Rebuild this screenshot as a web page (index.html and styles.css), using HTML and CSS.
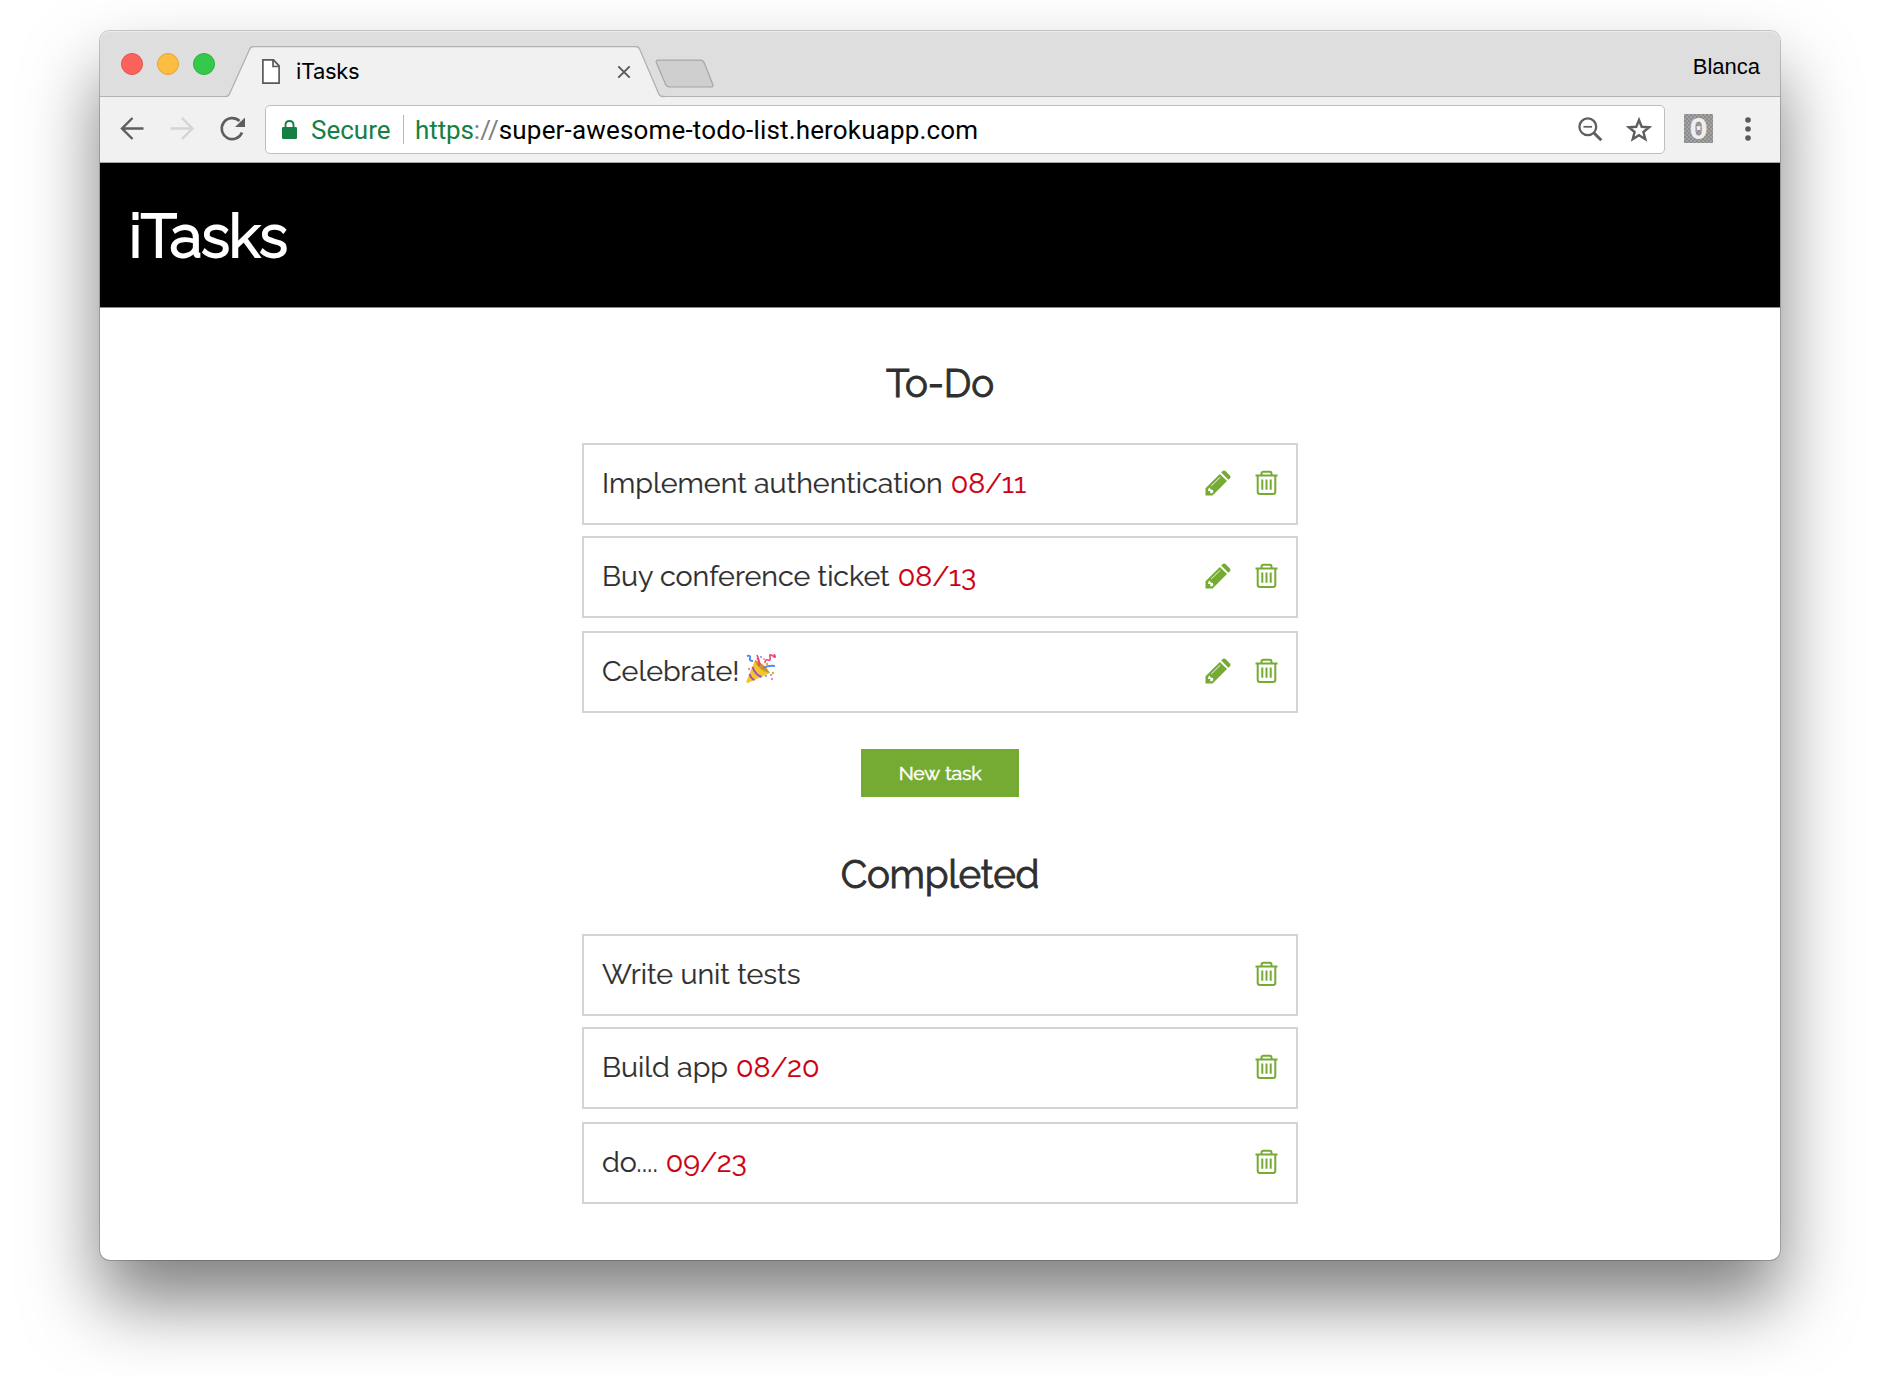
FILE: index.html
```html
<!DOCTYPE html>
<html lang="en">
<head>
<meta charset="utf-8">
<title>iTasks</title>
<link rel="stylesheet" href="styles.css">
</head>
<body>
<svg class="symbols" aria-hidden="true">
  <symbol id="pencil" viewBox="0 0 26 26">
    <path fill="#76ab33" d="M.5 18.200 14.800 3.900l7.200 7.200L7.600 25.500H.5z"/>
    <path fill="#76ab33" d="m16.200 2.500 1.500-1.400q1.400-1.100 2.800 0l4.400 4.400q1.200 1.300 0 2.700l-1.500 1.500z"/>
    <path fill="none" stroke="#fff" stroke-width=".9" d="m6.200 16 9-8.800"/>
    <path fill="#fff" d="m3.400 18.800 1.300-1.300 1 2 2.200.5.5 2-1.300 1.300H5.200v-2.200H2.900z"/>
  </symbol>
  <symbol id="trash" viewBox="0 0 24 26">
    <g fill="none" stroke="#76ab33" stroke-width="2">
      <path d="M.5 5.500h22M6.500 5.500V3.700q0-2 2-2h6q2 0 2 2v1.800M2.700 5.500v16.200Q2.700 24 5 24h13q2.300 0 2.300-2.300V5.500"/>
      <path d="M7.300 9.500v10.300M11.500 9.500v10.300M15.700 9.500v10.300"/>
    </g>
  </symbol>
</svg>
<div class="window">
  <div class="tabstrip">
    <div class="lights"><i class="light red"></i><i class="light amber"></i><i class="light green"></i></div>
    <div class="tab">
      <svg class="tab-shape" width="439" height="52" viewBox="-2 0 439 52"><path d="M-2 50.500q2.500 0 3.700-3L21.500 3.500q1.300-3 4-3H408q2.500 0 3.800 3l18.800 44q1.300 3 4 3H437V52H-2z" fill="#f1f1f1"/><path d="M-2 50.500q2.500 0 3.700-3L21.500 3.500q1.300-3 4-3H408q2.500 0 3.800 3l18.800 44q1.300 3 4 3H437" fill="none" stroke="#b1b1b1" stroke-width="1.300"/></svg>
      <svg class="page-icon" width="18" height="25" viewBox="0 0 18 25"><path d="M.9.9h10.600l5.600 6v17.200H.9zM11 .9v6.600h6" fill="#fff" stroke="#5a5a5a" stroke-width="1.700"/></svg>
      <span class="tab-title">iTasks</span>
      <svg class="close" width="14" height="14" viewBox="0 0 14 14"><path d="m1.300 1.300 11.400 11.400M12.700 1.300 1.300 12.700" stroke="#5a5a5a" stroke-width="1.900"/></svg>
    </div>
    <svg class="new-tab" width="60" height="30" viewBox="0 0 60 30"><path d="M3 1.200h42q3 0 4.300 2.800l8.500 21.500q.8 2.500-1.800 2.500H15q-3.200 0-4.500-2.800L1.300 3.500Q.6 1.200 3 1.200z" fill="#cfcfcf" stroke="#a6a6a6" stroke-width="1.200"/></svg>
    <span class="profile">Blanca</span>
  </div>
  <div class="toolbar">
    <svg class="nav" width="126" height="26" viewBox="0 0 126 26" fill="none" stroke-width="2.400">
      <path d="M24.500 12.500h-22M13.500 2 3 12.500 13.500 23" stroke="#5e5e5e"/>
      <path d="M51.500 12.500h22M63 2l10.500 10.500L63 23" stroke="#d4d4d4"/>
      <path d="M123 16.500A10.500 10.500 0 1 1 120.500 5" stroke="#5e5e5e" stroke-width="2.600"/>
      <path d="M126 1.500v9.500h-10z" fill="#5e5e5e"/>
    </svg>
    <div class="address">
      <svg class="lock" width="15" height="19" viewBox="0 0 15 19"><path d="M3.500 9V5q0-4 4-4t4 4v4" fill="none" stroke="#168043" stroke-width="1.900"/><rect y="7" width="15" height="12" rx="1.200" fill="#168043"/></svg>
      <span class="secure">Secure</span>
      <span class="divider"></span>
      <span class="url"><span class="scheme">https</span><span class="slashes">://</span><span class="host">super-awesome-todo-list.herokuapp.com</span></span>
      <svg class="zoom-out" width="25" height="25" viewBox="0 0 25 25" fill="none" stroke="#5e5e5e"><circle cx="9.800" cy="9.800" r="8.400" stroke-width="2.300"/><path d="M5.500 9.800h8.600" stroke-width="1.700"/><path d="m16 16 7.300 7.300" stroke-width="3"/></svg>
      <svg class="star" width="26" height="25" viewBox="0 0 26 25"><path d="m13 3 2.700 6.800 7.500.5-5.800 4.700 1.900 7.200-6.300-4-6.300 4L8.600 15l-5.800-4.700 7.500-.5z" fill="none" stroke="#5e5e5e" stroke-width="2.400"/></svg>
    </div>
    <div class="extension"><span>0</span></div>
    <svg class="menu" width="6" height="24" viewBox="0 0 6 24" fill="#5a5a5a"><circle cx="3" cy="3" r="2.800"/><circle cx="3" cy="12" r="2.800"/><circle cx="3" cy="21" r="2.800"/></svg>
  </div>
  <header class="app-header"><h1>iTasks</h1></header>
  <main class="content">
    <h2>To-Do</h2>
    <ul class="tasks">
      <li class="task"><span class="name">Implement authentication</span><time>08/11</time><svg class="pencil"><use href="#pencil"/></svg><svg class="trash"><use href="#trash"/></svg></li>
      <li class="task"><span class="name">Buy conference ticket</span><time>08/13</time><svg class="pencil"><use href="#pencil"/></svg><svg class="trash"><use href="#trash"/></svg></li>
      <li class="task"><span class="name">Celebrate!</span><svg class="party" width="30" height="30" viewBox="0 0 30 30">
        <path d="M9 6Q17 9 24 19L2 29Q0 29 .5 27z" fill="#f3c62f"/>
        <path d="M9 6q9 3 15 13-5 0-10-4.500T9 6z" fill="#cf9827"/>
        <path d="M6.500 13q3 8 9 10M3.500 20q2 5 5 6" fill="none" stroke="#9a4fc0" stroke-width="2"/>
        <path d="M13 12q1-5-2-8M14 11q-1-6-3-10" fill="none" stroke="#ee3f6c" stroke-width="1.600"/>
        <path d="M1 2q4-1 3 2t3 3M17 14q6-3 12-2" fill="none" stroke="#4c8df0" stroke-width="1.900"/>
        <path d="M19 9q0-4 3-3t2-3 3-1 1-2" fill="none" stroke="#ec4a78" stroke-width="1.600"/>
        <g fill="#f08bab"><circle cx="3" cy="15" r="1.200"/><circle cx="26" cy="25" r="1.200"/><circle cx="18" cy="5" r="1"/></g>
        <g fill="#f0a43c"><circle cx="27" cy="19" r="1.300"/><circle cx="21" cy="10" r="1.200"/></g>
        <g fill="#5c98ee"><circle cx="15" cy="3" r="1"/><circle cx="20" cy="22" r="1"/><circle cx="25" cy="21" r="1"/></g>
      </svg><svg class="pencil"><use href="#pencil"/></svg><svg class="trash"><use href="#trash"/></svg></li>
    </ul>
    <button class="new-task">New task</button>
    <h2 class="completed">Completed</h2>
    <ul class="tasks">
      <li class="task"><span class="name">Write unit tests</span><svg class="trash"><use href="#trash"/></svg></li>
      <li class="task"><span class="name">Build app</span><time>08/20</time><svg class="trash"><use href="#trash"/></svg></li>
      <li class="task"><span class="name">do....</span><time>09/23</time><svg class="trash"><use href="#trash"/></svg></li>
    </ul>
  </main>
</div>
</body>
</html>
```
FILE: styles.css
```css
* { box-sizing: border-box; }
body { margin: 0; height: 1376px; padding: 31px 100px 0; overflow: hidden; background: #fff; }
svg { display: block; flex: none; }
.symbols { position: absolute; width: 0; height: 0; }
.window {
  height: 1229px;
  border-radius: 10px;
  background: #fff;
  box-shadow: 0 0 0 1px rgba(0, 0, 0, .2), 0 42px 72px rgba(0, 0, 0, .5);
}

.tabstrip {
  display: flex;
  height: 66px;
  border-bottom: 1px solid #b1b1b1;
  border-radius: 10px 10px 0 0;
  background: #dedede;
  box-shadow: inset 0 1px #ececec;
}
.lights { display: flex; gap: 14px; padding: 22px 0 0 21px; width: 128px; }
.light { width: 22px; height: 22px; border-radius: 50%; border: 1px solid; }
.red { background: #fc615c; border-color: #e5504c; }
.amber { background: #fdbd40; border-color: #e2a339; }
.green { background: #34c94a; border-color: #2bb03c; }
.tab { position: relative; display: flex; width: 434px; height: 51px; margin-top: 15px; }
.tab-shape { position: absolute; left: -2px; top: 0; }
.page-icon { position: relative; margin: 13px 0 0 34px; }
.tab-title { position: relative; margin: 11px 0 0 16px; font: 22px/28px Inter, Roboto, sans-serif; letter-spacing: -.4px; }
.close { position: absolute; left: 389px; top: 19px; }
.new-tab { margin: 28px 0 0 -7px; }
.profile { margin: 22px 20px 0 auto; font: 22px/28px "Liberation Sans", sans-serif; }

.toolbar { display: flex; height: 66px; background: #f1f1f1; border-bottom: 1px solid #a5a5a5; }
.nav { margin: 19px 0 0 19px; }
.address {
  display: flex;
  width: 1400px;
  height: 49px;
  margin: 8px 0 0 20px;
  border: 1px solid #bfbfbf;
  border-radius: 5px;
  background: #fff;
  font: 26px/32px Roboto, sans-serif;
}
.lock { margin: 14px 0 0 16px; }
.secure { margin: 8px 0 0 14px; width: 92px; color: #168043; }
.divider { width: 1px; height: 29px; margin-top: 9px; background: #b5b5b5; }
.url { margin: 8px 0 0 11px; white-space: nowrap; color: #000; }
.scheme { color: #168043; letter-spacing: -.1px; }
.slashes { color: #808080; }
.host { letter-spacing: .17px; }
.zoom-out { margin: 11px 0 0 auto; }
.star { margin: 11px 12px 0 23px; }
.extension {
  width: 29px;
  height: 29px;
  margin: 17px 0 0 19px;
  background: repeating-conic-gradient(#8c8c8c 0 25%, #a2a2a2 0 50%) 0 0 / 4px 4px;
  color: #eee;
  font: bold 32px/33px "Liberation Mono", monospace;
  text-align: center;
}
.menu { margin: 20px 0 0 32px; }

.app-header { height: 145px; padding: 37px 0 0 29px; background: #000; border-bottom: 1px solid #888; }
h1, h2 { margin: 0; font-family: Raleway, Lato, sans-serif; font-weight: 400; }
h1 { color: #fff; font-size: 59.500px; line-height: 72px; letter-spacing: -1.100px; -webkit-text-stroke: 1.900px; }

.content { display: flex; flex-direction: column; align-items: center; font-family: Raleway, Lato, sans-serif; color: #2f2f2f; }
h2 { margin-top: 52px; font-size: 38.500px; line-height: 48px; letter-spacing: -.2px; -webkit-text-stroke: .9px; }
h2.completed { margin-top: 54px; }
.tasks { display: flex; flex-direction: column; gap: 11px; width: 716px; margin: 35px 0 0; padding: 0; list-style: none; }
.task {
  display: flex;
  height: 82px;
  padding: 0 17px 0 18px;
  border: 2px solid #d4d4d4;
  font-size: 28.600px;
  line-height: 76px;
  white-space: nowrap;
  -webkit-text-stroke: .2px;
}
.task:last-child { margin-top: 2px; }
time { margin-left: 8px; color: #cc0011; }
.party { margin: 21px 0 0 7px; }
.pencil { width: 26px; height: 26px; margin: 25px 24px 0 auto; }
.trash { width: 24px; height: 26px; margin: 25px 0 0 auto; }
.pencil + .trash { margin-left: 0; }
.new-task {
  width: 158px;
  height: 48px;
  margin-top: 36px;
  padding: 2px 0 0;
  border: 0;
  background: #76ab33;
  color: #fff;
  font: 400 19.500px/46px Raleway, Lato, sans-serif;
  letter-spacing: -.2px;
  word-spacing: 1px;
  -webkit-text-stroke: .5px;
}
```
